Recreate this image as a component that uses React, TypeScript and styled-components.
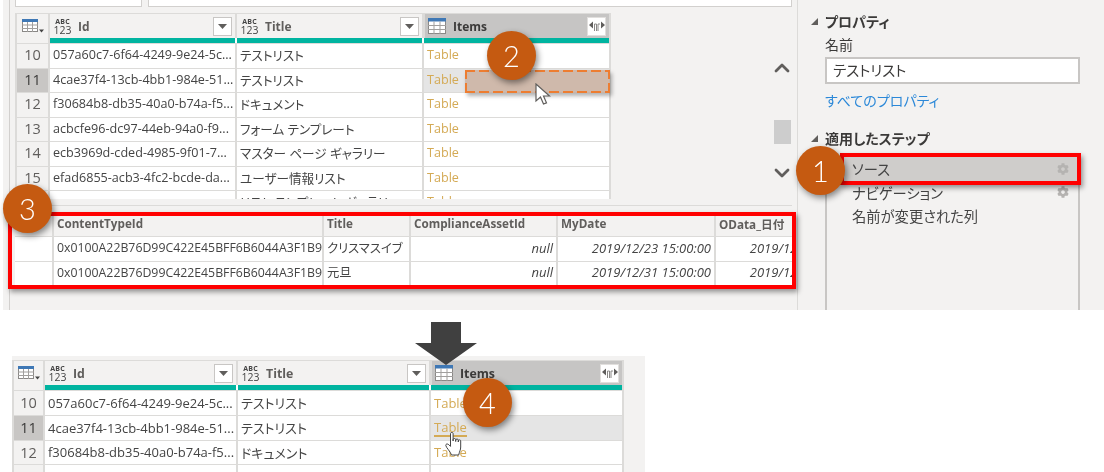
import React from 'react';
import styled, { createGlobalStyle } from 'styled-components';
import { ChevronUp, ChevronDown } from 'lucide-react';
import { FaCog } from 'react-icons/fa';

const Global = createGlobalStyle`
  html, body { margin: 0; padding: 0; background: #fff; }
  * { box-sizing: border-box; }
`;

const Shell = styled.div`
  position: relative;
  width: 1104px;
  height: 472px;
  overflow: hidden;
  background: #fff;
  font-family: "Open Sans", "Noto Sans CJK JP", sans-serif;
  font-feature-settings: "palt";
  color: #444;
  filter: blur(0.3px);
`;

const TopPanel = styled.section`
  display: flex;
  height: 310px;
  margin-left: 3px;
  background: #f3f2f1;
`;

const MainCol = styled.div`
  display: flex;
  flex-direction: column;
  width: 789px;
  margin-left: 6px;
  border-left: 1px solid #d2d0ce;
  border-right: 1px solid #dcdbd9;
  padding-left: 5px;
`;

const FormulaRow = styled.div`
  display: flex;
  gap: 6px;
  height: 7px;
  padding-right: 5px;
`;

const FormulaBox = styled.div<{ $w?: number }>`
  ${p => (p.$w ? `width: ${p.$w}px;` : 'flex: 1;')}
  background: #fff;
  border: 1px solid #d2d0ce;
  border-top: 0;
`;

const GridArea = styled.div`
  display: flex;
  height: 186px;
  margin-top: 6px;
`;

const Viewport = styled.div`
  width: 596px;
  overflow: hidden;
`;

const Grid = styled.div<{ $cols: string; $font: number; $rowH: number; $lift: number }>`
  --cols: ${p => p.$cols};
  --rh: ${p => p.$rowH}px;
  --lift: ${p => p.$lift}px;
  font-size: ${p => p.$font}px;
  background: #dcdbd9;
`;

const HeaderRow = styled.div`
  display: grid;
  grid-template-columns: var(--cols);
  height: 25px;
  border-top: 1px solid #dcdbd9;
`;

const HeadCell = styled.div<{ $active?: boolean }>`
  display: flex;
  align-items: center;
  gap: 7px;
  padding: 0 3px 0 ${p => (p.$active ? 3 : 4)}px;
  background: ${p => (p.$active ? '#c6c5c4' : '#f3f2f1')};
  border-right: 2px solid #dcdbd9;
  border-left: ${p => (p.$active ? '1px solid #dcdbd9' : '0')};
  font-weight: 700;
  font-size: 0.95em;
  color: ${p => (p.$active ? '#3b3a39' : '#605e5c')};
  &:first-child { justify-content: center; padding: 0; border-left: 2px solid #dcdbd9; }
  &:last-child { border-right: 2px solid #dcdbd9; }
`;

const HeadName = styled.span`
  flex: 1;
  white-space: nowrap;
`;

const TypeBadge = styled.span`
  display: inline-flex;
  flex-direction: column;
  align-items: center;
  width: 17px;
  font-weight: 400;
  color: #444;
`;

const TypeAbc = styled.span`
  font-size: 7px;
  font-weight: 700;
  line-height: 7px;
  letter-spacing: 0.2px;
`;

const TypeNum = styled.span`
  font-size: 10.5px;
  line-height: 10px;
`;

const HeadBtn = styled.span`
  display: flex;
  align-items: center;
  justify-content: center;
  width: 19px;
  height: 19px;
  background: #fff;
  border: 1px solid #c8c6c4;
`;

const ExpandBtn = styled(HeadBtn)`
  border-color: #e1dfdd;
`;

const QualityRow = styled.div`
  display: grid;
  grid-template-columns: var(--cols);
  height: 5px;
  background: #f3f2f1;
`;

const QualityCell = styled.div`
  background: #00b4a0;
  border-right: 2px solid #fff;
  &:first-child { background: #f3f2f1; border-left: 2px solid #dcdbd9; border-right: 2px solid #dcdbd9; }
  &:last-child { border-right: 2px solid #dcdbd9; }
`;

const DataRow = styled.div`
  display: grid;
  grid-template-columns: var(--cols);
  height: var(--rh);
  border-top: 1px solid #dcdbd9;
`;

const NumCell = styled.div<{ $sel?: boolean }>`
  display: flex;
  align-items: center;
  justify-content: center;
  padding-bottom: var(--lift);
  font-size: 14.5px;
  color: ${p => (p.$sel ? '#3b3a39' : '#605e5c')};
  background: ${p => (p.$sel ? '#c8c6c4' : '#f3f2f1')};
  border-left: 2px solid #dcdbd9;
  border-right: 2px solid #dcdbd9;
`;

const DataCell = styled.div`
  display: flex;
  align-items: center;
  padding: 0 0 var(--lift) 3px;
  background: #fff;
  border-right: 2px solid #dcdbd9;
  white-space: nowrap;
  overflow: hidden;
`;

const TableCell = styled(DataCell)<{ $hl?: boolean; $link?: boolean }>`
  color: #d4aa55;
  background: ${p => (p.$hl ? '#e5e5e5' : '#fff')};
  & > span { ${p => (p.$link ? 'border-bottom: 2px solid #d4aa55; line-height: 15px; margin-top: 2px;' : '')} }
`;

const ScrollTrack = styled.div`
  display: flex;
  flex-direction: column;
  align-items: center;
  width: 18px;
  height: 150px;
  margin: 43px 0 0 162px;
  color: #605e5c;
`;

const ScrollThumb = styled.div`
  flex: none;
  width: 17px;
  height: 24px;
  margin: 40px 0 17px;
  background: #cdcdcd;
`;

const PreviewPane = styled.div`
  flex: 1;
  margin: 6px 5px 0 -5px;
  padding: 7px 0 0 5px;
  border-top: 1px solid #dcdbd9;
  min-height: 0;
`;

const PreviewClip = styled.div`
  overflow: hidden;
  font-size: 12.3px;
  background: #dcdbd9;
  border-bottom: 2px solid #dcdbd9;
`;

const PreviewRow = styled.div<{ $head?: boolean }>`
  display: grid;
  grid-template-columns: 39px 270px 87px 147px 158px 158px;
  height: ${p => (p.$head ? 23 : 24.5)}px;
  width: 859px;
  font-weight: ${p => (p.$head ? 700 : 400)};
  font-size: ${p => (p.$head ? 11.7 : 12.3)}px;
  color: ${p => (p.$head ? '#605e5c' : '#444')};
  border-top: 1px solid #dcdbd9;
`;

const PreviewCell = styled.div<{ $head?: boolean; $right?: boolean }>`
  display: flex;
  align-items: center;
  justify-content: ${p => (p.$right ? 'flex-end' : 'flex-start')};
  padding: 0 3px ${p => (p.$head ? 4 : 2)}px;
  background: ${p => (p.$head ? '#f3f2f1' : '#fff')};
  border-right: 2px solid #dcdbd9;
  white-space: nowrap;
  overflow: hidden;
  font-style: ${p => (p.$right ? 'italic' : 'normal')};
  font-size: ${p => (p.$right ? '13px' : 'inherit')};
`;

const SideCol = styled.aside`
  display: flex;
  flex-direction: column;
  flex: 1;
  padding: 12px 24px 0 27px;
  color: #3b3a39;
  font-size: 14px;
`;

const SideHeading = styled.h3<{ $gap?: number }>`
  position: relative;
  margin: ${p => p.$gap ?? 0}px 0 0 0;
  font-size: 14px;
  font-weight: 700;
  line-height: 19px;
  &::before {
    content: "";
    position: absolute;
    left: -14px;
    top: 6px;
    border-style: solid;
    border-width: 0 0 7px 7px;
    border-color: transparent transparent #605e5c transparent;
  }
`;

const SideLabel = styled.div`
  margin-top: 4px;
  line-height: 19px;
`;

const NameBox = styled.div`
  height: 27px;
  margin-top: 3px;
  padding-left: 6px;
  line-height: 23px;
  background: #fff;
  border: 2px solid #c8c6c4;
  font-size: 14.5px;
`;

const SideLink = styled.div`
  margin-top: 7px;
  line-height: 20px;
  color: #2b88d8;
`;

const StepsBox = styled.div`
  flex: 1;
  margin-top: 9px;
  border-left: 2px solid #c8c6c4;
  border-right: 2px solid #c8c6c4;
`;

const StepRow = styled.div<{ $sel?: boolean }>`
  display: flex;
  align-items: center;
  justify-content: space-between;
  height: 23.6px;
  padding: 0 9px 0 25px;
  background: ${p => (p.$sel ? '#cfcdcb' : 'transparent')};
  color: #444;
  font-size: 14.3px;
  & > svg { color: #b5b3b1; width: 12px; height: 12px; }
`;

const BottomPanel = styled.section`
  width: 633px;
  height: 116px;
  margin: 46px 0 0 12px;
  padding-top: 4px;
  overflow: hidden;
  background: #f3f2f1;
`;

const BottomGrid = styled.div`
  width: 612px;
`;

const Marker = styled.div<{ $x: number; $y: number }>`
  position: absolute;
  left: ${p => p.$x}px;
  top: ${p => p.$y}px;
  width: 49px;
  height: 49px;
  display: flex;
  align-items: center;
  justify-content: center;
  border-radius: 50%;
  background: #c55a11;
  color: #fff;
  font-family: "Lato", "Open Sans", sans-serif;
  font-weight: 300;
  font-size: 29px;
  box-shadow: 2px 3px 6px rgba(0, 0, 0, 0.45);
`;

const RedFrame = styled.div<{ $x: number; $y: number; $w: number; $h: number }>`
  position: absolute;
  left: ${p => p.$x}px;
  top: ${p => p.$y}px;
  width: ${p => p.$w}px;
  height: ${p => p.$h}px;
  border: 4px solid #f00;
  box-shadow: 2px 3px 5px rgba(0, 0, 0, 0.4);
`;

const DragGhost = styled.div`
  position: absolute;
  left: 465px;
  top: 70px;
  width: 145px;
  height: 23px;
  background-color: rgba(180, 130, 100, 0.45);
  background-image:
    repeating-linear-gradient(90deg, #ed7d31 0 10px, transparent 10px 14px),
    repeating-linear-gradient(90deg, #ed7d31 0 10px, transparent 10px 14px),
    repeating-linear-gradient(0deg, #ed7d31 0 10px, transparent 10px 14px),
    repeating-linear-gradient(0deg, #ed7d31 0 10px, transparent 10px 14px);
  background-size: 100% 2px, 100% 2px, 2px 100%, 2px 100%;
  background-position: 0 0, 0 100%, 0 0, 100% 0;
  background-repeat: no-repeat;
  box-shadow: 2px 3px 4px rgba(0, 0, 0, 0.3);
`;

const CursorMark = styled.svg`
  position: absolute;
  left: 535px;
  top: 83px;
  width: 16px;
  height: 23px;
`;

const HandMark = styled.svg`
  position: absolute;
  left: 445px;
  top: 431px;
  width: 20px;
  height: 25px;
`;

const DownArrow = styled.svg`
  position: absolute;
  left: 415px;
  top: 322px;
  width: 62px;
  height: 43px;
`;

const TableIcon = () => (
  <svg width="18" height="16" viewBox="0 0 18 16">
    <rect x="0.5" y="0.5" width="17" height="15" fill="#fff" stroke="#8a8886" />
    <rect x="0" y="0" width="18" height="3.5" fill="#3f78b5" />
    <path d="M0 7.5H18M0 11.5H18M6 3.5V16M12 3.5V16" stroke="#a19f9d" strokeWidth="1" />
  </svg>
);

const CornerIcon = () => (
  <svg width="22" height="14" viewBox="0 0 22 14">
    <rect x="0.5" y="0.5" width="15" height="12" fill="#fff" stroke="#8a8886" />
    <rect x="0" y="0" width="16" height="3" fill="#3f78b5" />
    <path d="M0 6H16M0 9.5H16M5.5 3V13M10.5 3V13" stroke="#a19f9d" />
    <path d="M17 10.5h5l-2.5 3z" fill="#444" />
  </svg>
);

const FilterIcon = () => (
  <svg width="9" height="5" viewBox="0 0 9 5"><path d="M0 0h9L4.5 5z" fill="#605e5c" /></svg>
);

const ExpandIcon = () => (
  <svg width="16" height="11" viewBox="0 0 16 11">
    <path d="M0 4l4-3.5v7zM16 4l-4-3.5v7z" fill="#605e5c" />
    <path d="M5.5 10V3h2v7M9 10V3h2" fill="none" stroke="#8a8886" strokeWidth="1" />
  </svg>
);

const Typed = ({ name }: { name: string }) => (
  <HeadCell>
    <TypeBadge><TypeAbc>ABC</TypeAbc><TypeNum>123</TypeNum></TypeBadge>
    <HeadName>{name}</HeadName>
    <HeadBtn><FilterIcon /></HeadBtn>
  </HeadCell>
);

type RowData = { n: number; id: string; title: string };

const DataTable = ({
  rows, cols, font, rowH, lift, hlLink,
}: { rows: RowData[]; cols: string; font: number; rowH: number; lift: number; hlLink?: boolean }) => (
  <Grid $cols={cols} $font={font} $rowH={rowH} $lift={lift}>
    <HeaderRow>
      <HeadCell><CornerIcon /></HeadCell>
      <Typed name="Id" />
      <Typed name="Title" />
      <HeadCell $active>
        <TableIcon />
        <HeadName>Items</HeadName>
        <ExpandBtn><ExpandIcon /></ExpandBtn>
      </HeadCell>
    </HeaderRow>
    <QualityRow><QualityCell /><QualityCell /><QualityCell /><QualityCell /></QualityRow>
    {rows.map(r => (
      <DataRow key={r.n}>
        <NumCell $sel={r.n === 11}>{r.n}</NumCell>
        <DataCell>{r.id}</DataCell>
        <DataCell>{r.title}</DataCell>
        <TableCell $hl={r.n === 11} $link={hlLink && r.n === 11}><span>Table</span></TableCell>
      </DataRow>
    ))}
  </Grid>
);

const topRows: RowData[] = [
  { n: 10, id: '057a60c7-6f64-4249-9e24-5c...', title: 'テストリスト' },
  { n: 11, id: '4cae37f4-13cb-4bb1-984e-51...', title: 'テストリスト' },
  { n: 12, id: 'f30684b8-db35-40a0-b74a-f5...', title: 'ドキュメント' },
  { n: 13, id: 'acbcfe96-dc97-44eb-94a0-f9...', title: 'フォーム テンプレート' },
  { n: 14, id: 'ecb3969d-cded-4985-9f01-7...', title: 'マスター ページ ギャラリー' },
  { n: 15, id: 'efad6855-acb3-4fc2-bcde-da...', title: 'ユーザー情報リスト' },
  { n: 16, id: '', title: 'リスト テンプレート ギャラリー' },
];

const previewHead = ['', 'ContentTypeId', 'Title', 'ComplianceAssetId', 'MyDate', 'OData_日付'];
const previewRows = [
  ['クリスマスイブ', '2019/12/23 15:00:00'],
  ['元旦', '2019/12/31 15:00:00'],
];

export default function App() {
  return (
    <Shell>
      <Global />
      <TopPanel>
        <MainCol>
          <FormulaRow>
            <FormulaBox $w={127} />
            <FormulaBox />
          </FormulaRow>
          <GridArea>
            <Viewport>
              <DataTable rows={topRows} cols="35px 187px 187px 187px" font={12.6} rowH={24.5} lift={2} />
            </Viewport>
            <ScrollTrack>
              <ChevronUp size={24} strokeWidth={2.8} style={{ flex: 'none' }} />
              <ScrollThumb />
              <ChevronDown size={24} strokeWidth={2.8} style={{ flex: 'none' }} />
            </ScrollTrack>
          </GridArea>
          <PreviewPane>
            <PreviewClip>
              <PreviewRow $head>
                {previewHead.map((h, i) => <PreviewCell key={i} $head>{h}</PreviewCell>)}
              </PreviewRow>
              {previewRows.map(([title, date]) => (
                <PreviewRow key={title}>
                  <PreviewCell />
                  <PreviewCell>0x0100A22B76D99C422E45BFF6B6044A3F1B9C</PreviewCell>
                  <PreviewCell>{title}</PreviewCell>
                  <PreviewCell $right>null</PreviewCell>
                  <PreviewCell $right>{date}</PreviewCell>
                  <PreviewCell $right>{date}</PreviewCell>
                </PreviewRow>
              ))}
            </PreviewClip>
          </PreviewPane>
        </MainCol>
        <SideCol>
          <SideHeading>プロパティ</SideHeading>
          <SideLabel>名前</SideLabel>
          <NameBox>テストリスト</NameBox>
          <SideLink>すべてのプロパティ</SideLink>
          <SideHeading $gap={18}>適用したステップ</SideHeading>
          <StepsBox>
            <StepRow $sel>ソース<FaCog /></StepRow>
            <StepRow>ナビゲーション<FaCog /></StepRow>
            <StepRow>名前が変更された列</StepRow>
          </StepsBox>
        </SideCol>
      </TopPanel>

      <BottomPanel>
        <BottomGrid>
          <DataTable rows={[
            topRows[0], topRows[1], topRows[2],
            { n: 13, id: '', title: '' },
          ]} cols="33px 193px 193px 193px" font={13} rowH={24.8} lift={0} hlLink />
        </BottomGrid>
      </BottomPanel>

      <DragGhost />
      <CursorMark viewBox="0 0 16 23">
        <path d="M1 1v17l4.5-4 3 7 3-1.2-3-6.8h6z" fill="#fff" stroke="#605e5c" strokeWidth="1.2" />
      </CursorMark>
      <RedFrame $x={8} $y={212} $w={788} $h={77} />
      <RedFrame $x={840} $y={153} $w={241} $h={32} />
      <DownArrow viewBox="0 0 62 43">
        <path d="M16 0h30v21h16L31 43 0 21h16z" fill="#404040" />
      </DownArrow>
      <HandMark viewBox="0 0 20 25">
        <path
          d="M5.5 2.5c0-1.4 2.6-1.4 2.6 0V10V8.5c0-1.3 2.6-1.3 2.6 0V10.5V9c0-1.3 2.6-1.3 2.6 0V11V9.8c0-1.2 2.4-1.2 2.4 0V16c0 3-1.3 4.5-2 8H6.5C5.5 20.5 1 16.5 0.8 14.5c-.2-1.7 1.7-2 3-.8l1.7 1.7z"
          fill="#fff"
          stroke="#444"
          strokeWidth="1"
          strokeLinejoin="round"
        />
      </HandMark>
      <Marker $x={796} $y={146}>1</Marker>
      <Marker $x={487} $y={31}>2</Marker>
      <Marker $x={3} $y={184}>3</Marker>
      <Marker $x={463} $y={378}>4</Marker>
    </Shell>
  );
}
